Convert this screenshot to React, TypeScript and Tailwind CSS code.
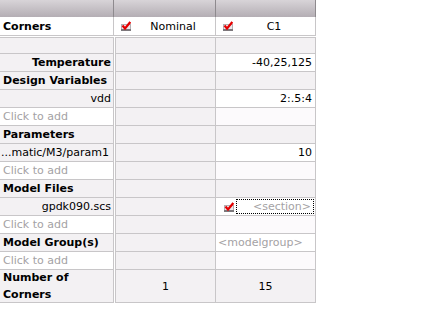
import React from "react";

const Check = () => (
  <svg width="10" height="10" viewBox="0 0 10 10" className="shrink-0">
    <rect x="0.5" y="3.5" width="9" height="6" fill="#ece8ec" stroke="#b4b0b4" />
    <rect x="0" y="8" width="10" height="2" fill="#7c787c" />
    <path d="M1.5 4.5 L4 7.5 L9.3 1" stroke="#e40000" strokeWidth="2.2" fill="none" />
  </svg>
);

type RowProps = {
  c1?: React.ReactNode;
  c1bg?: string;
  c2?: React.ReactNode;
  c3?: React.ReactNode;
  c3bg?: string;
  h?: string;
  first?: boolean;
};

const GRAY = "bg-[#f3f1f3]";

function Row({ c1, c1bg = GRAY, c2, c3, c3bg = GRAY, h = "h-[18px]", first }: RowProps) {
  const bt = first ? "border-t" : "";
  return (
    <div className={`flex ${h}`}>
      <div className={`w-[114px] border-r border-b ${bt} border-[#c8c6c8] ${c1bg} flex items-center overflow-hidden whitespace-nowrap`}>
        {c1}
      </div>
      <div className="w-[1px] bg-white" />
      <div className={`w-[101px] border-l border-r border-b ${bt} border-[#c8c6c8] ${GRAY} flex items-center justify-center`}>
        {c2}
      </div>
      <div className={`w-[100px] border-r border-b ${bt} border-[#c8c6c8] ${c3bg} flex items-center overflow-hidden whitespace-nowrap`}>
        {c3}
      </div>
    </div>
  );
}

const Bold = ({ children }: { children: React.ReactNode }) => (
  <span className="pl-[3px] font-bold">{children}</span>
);
const Add = () => <span className="pl-[3px] text-[#a4a2a4]">Click to add</span>;
const Right = ({ children, bold }: { children: React.ReactNode; bold?: boolean }) => (
  <span className={`ml-auto pr-[2px] ${bold ? "font-bold" : ""}`}>{children}</span>
);
const Val = ({ children }: { children: React.ReactNode }) => (
  <span className="ml-auto pr-[3px]">{children}</span>
);

export default function App() {
  return (
    <div className="w-[427px] h-[313px] bg-white text-[11px] leading-none text-black font-['DejaVu_Sans',Verdana,sans-serif]">
      <div className="w-[316px]">
        {/* header */}
        <div className="flex h-[17px] bg-gradient-to-b from-[#d8d4d8] to-[#b4aeb4]">
          <div className="w-[114px] border-r border-[#8e8a8e]" />
          <div className="w-[102px] border-r border-[#8e8a8e]" />
          <div className="w-[100px] border-r border-[#8e8a8e]" />
        </div>
        {/* corners row */}
        <div className="flex h-[19px] bg-white border-b border-[#c8c6c8]">
          <div className="w-[114px] border-r border-[#c8c6c8] flex items-center">
            <Bold>Corners</Bold>
          </div>
          <div className="w-[102px] border-r border-[#c8c6c8] flex items-center pl-[7px]">
            <Check />
            <span className="flex-1 text-center">Nominal</span>
          </div>
          <div className="w-[100px] border-r border-[#c8c6c8] flex items-center pl-[7px]">
            <Check />
            <span className="flex-1 text-center">C1</span>
          </div>
        </div>
        <div className="h-[1px]" />
        <Row first h="h-[17px]" />
        <Row c1={<Right bold>Temperature</Right>} c3={<Val>-40,25,125</Val>} c3bg="bg-white" />
        <Row c1={<Bold>Design Variables</Bold>} />
        <Row c1={<Right>vdd</Right>} c3={<Val>2:.5:4</Val>} c3bg="bg-white" />
        <Row c1={<Add />} c1bg="bg-white" c3bg="bg-[#fcfafc]" />
        <Row c1={<Bold>Parameters</Bold>} />
        <Row c1={<span className="pl-[1px]">...matic/M3/param1</span>} c3={<Val>10</Val>} c3bg="bg-white" />
        <Row c1={<Add />} c1bg="bg-white" c3bg="bg-[#fcfafc]" />
        <Row c1={<Bold>Model Files</Bold>} />
        <Row
          c1={<Right>gpdk090.scs</Right>}
          c3bg="bg-white"
          c3={
            <div className="flex items-center w-full h-full pl-[8px] pr-[1px] py-[1px]">
              <Check />
              <div className="ml-[2px] flex-1 h-full border border-dotted border-black flex items-center justify-end pr-[2px] text-[#a4a2a4]">
                &lt;section&gt;
              </div>
            </div>
          }
        />
        <Row c1={<Add />} c1bg="bg-white" c3bg="bg-[#fcfafc]" />
        <Row
          c1={<Bold>Model Group(s)</Bold>}
          c3={<span className="pl-[2px] text-[#a4a2a4]">&lt;modelgroup&gt;</span>}
          c3bg="bg-white"
        />
        <Row c1={<Add />} c1bg="bg-white" c3bg="bg-[#fcfafc]" />
        <Row
          h="h-[33px]"
          c1={
            <span className="pl-[3px] font-bold leading-[17px]">
              Number of
              <br />
              Corners
            </span>
          }
          c2={<span>1</span>}
          c3={<span className="w-full text-center">15</span>}
        />
      </div>
    </div>
  );
}
